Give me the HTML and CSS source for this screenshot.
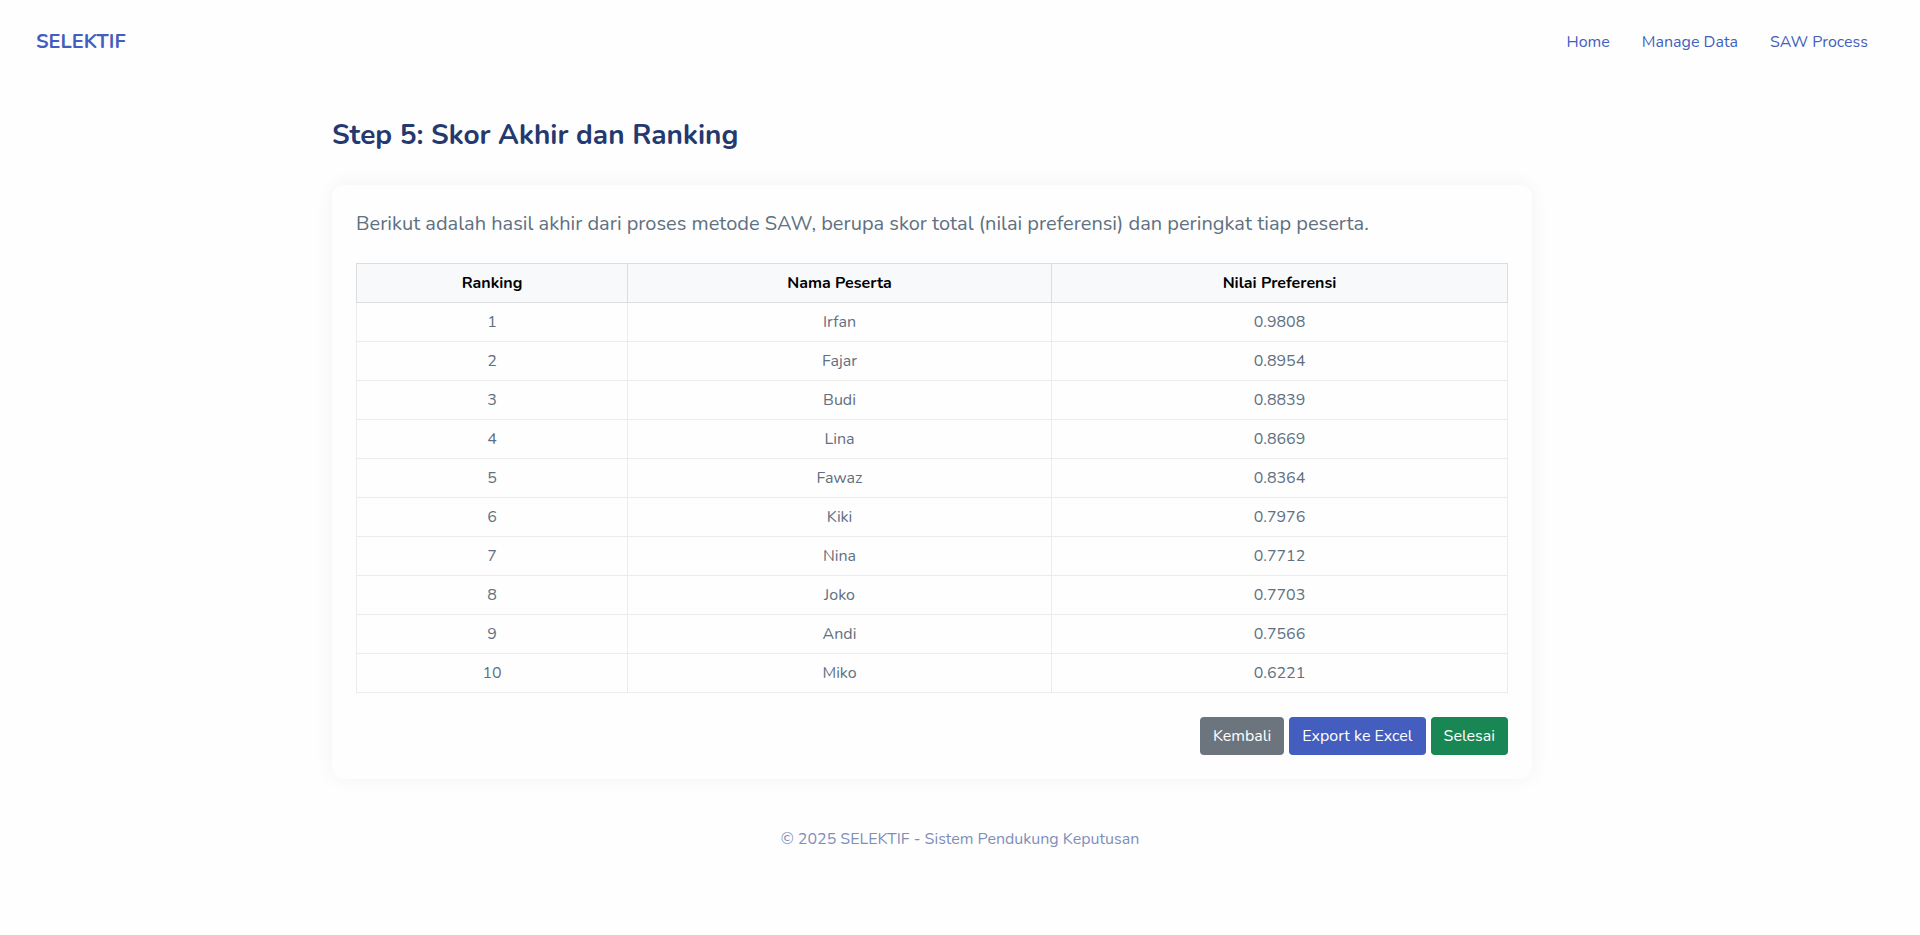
FILE: index.html
```html
<!DOCTYPE html>
<html lang="id">
<head>
<meta charset="utf-8">
<meta name="viewport" content="width=device-width, initial-scale=1">
<title>SELEKTIF</title>
<link rel="stylesheet" href="styles.css">
</head>
<body>
<header class="navbar">
  <a class="brand" href="#">SELEKTIF</a>
  <nav class="nav-links">
    <a href="#">Home</a>
    <a href="#">Manage Data</a>
    <a href="#">SAW Process</a>
  </nav>
</header>
<main class="page">
  <div class="container">
    <h1 class="title">Step 5: Skor Akhir dan Ranking</h1>
    <section class="card">
      <p class="lead">Berikut adalah hasil akhir dari proses metode SAW, berupa skor total (nilai preferensi) dan peringkat tiap peserta.</p>
      <table class="ranking">
        <colgroup><col class="col-rank"><col class="col-name"><col class="col-score"></colgroup>
        <thead>
          <tr><th scope="col">Ranking</th><th scope="col">Nama Peserta</th><th scope="col">Nilai Preferensi</th></tr>
        </thead>
        <tbody>
          <tr><td>1</td><td>Irfan</td><td>0.9808</td></tr>
          <tr><td>2</td><td>Fajar</td><td>0.8954</td></tr>
          <tr><td>3</td><td>Budi</td><td>0.8839</td></tr>
          <tr><td>4</td><td>Lina</td><td>0.8669</td></tr>
          <tr><td>5</td><td>Fawaz</td><td>0.8364</td></tr>
          <tr><td>6</td><td>Kiki</td><td>0.7976</td></tr>
          <tr><td>7</td><td>Nina</td><td>0.7712</td></tr>
          <tr><td>8</td><td>Joko</td><td>0.7703</td></tr>
          <tr><td>9</td><td>Andi</td><td>0.7566</td></tr>
          <tr><td>10</td><td>Miko</td><td>0.6221</td></tr>
        </tbody>
      </table>
      <div class="actions">
        <button type="button" class="btn btn-secondary">Kembali</button>
        <button type="button" class="btn btn-primary">Export ke Excel</button>
        <button type="button" class="btn btn-success">Selesai</button>
      </div>
    </section>
  </div>
</main>
<footer class="footer">© 2025 SELEKTIF - Sistem Pendukung Keputusan</footer>
</body>
</html>
```
FILE: styles.css
```css
*, *::before, *::after { box-sizing: border-box; }
body {
  margin: 0;
  background: #fefefe;
  color: #607080;
  font-family: Nunito, Lato, "Open Sans", sans-serif;
  font-size: 16px;
  line-height: 24px;
}
.navbar {
  display: flex;
  justify-content: space-between;
  align-items: center;
  padding: 27px 52px 27px 36px;
}
.navbar a { color: #435ebe; text-decoration: none; }
.navbar .brand { font-size: 20px; line-height: 30px; font-weight: 700; }
.nav-links { display: flex; gap: 32px; }
.page { padding: 32px 56px 0 0; }
.container { max-width: 1200px; margin: 0 auto; }
.title {
  margin: 0 0 31px;
  color: #25396f;
  font-size: 28px;
  line-height: 38px;
  font-weight: 700;
}
.card {
  padding: 24px;
  border-radius: 12px;
  background: #fefefe;
  box-shadow: 0 0 20px rgba(0, 0, 0, 0.05);
}
.lead { margin: 0 0 24px; font-size: 20px; line-height: 30px; }
.ranking {
  width: 100%;
  margin-bottom: 24px;
  border-collapse: collapse;
  table-layout: fixed;
  text-align: center;
}
.col-rank { width: 271px; }
.col-name { width: 424px; }
.ranking th, .ranking td { padding: 7px 8px; border: 1px solid #ebebeb; }
.ranking th { border-color: #dcdddf; background: #f8f9fa; color: #000; font-weight: 700; }
.actions { display: flex; justify-content: flex-end; gap: 5px; }
.btn {
  padding: 6px 12px;
  border: 1px solid transparent;
  border-radius: 4px;
  color: #fff;
  font: inherit;
}
.btn-secondary { background: #6c757d; }
.btn-primary { background: #435ebe; }
.btn-success { background: #198754; }
.footer { padding: 48px 16px; color: #7e8eba; text-align: center; }
```
